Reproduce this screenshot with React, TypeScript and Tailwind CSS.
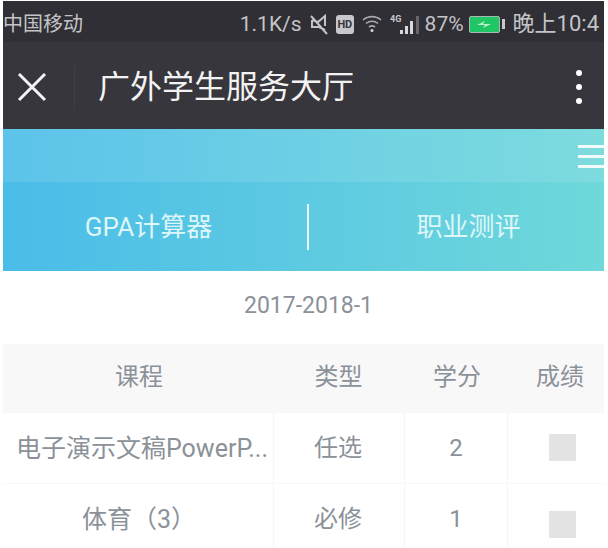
const cjk = "font-['Roboto','Noto_Sans_CJK_SC',sans-serif]";

const rows = [
  { name: "电子演示文稿PowerP...", type: "任选", credit: "2", namePad: "pl-[8px]", boxPad: "pb-[2px]" },
  { name: "体育（3）", type: "必修", credit: "1", namePad: "pl-[2px]", boxPad: "pt-[10px]" },
];

function StatusIcons() {
  return (
    <div className="flex items-center">
      <svg width="18" height="22" viewBox="0 0 18 22" fill="none" stroke="#c4c4c7" strokeWidth="2" className="ml-[8px]">
        <path d="M1 3l16 18M2 7l6 2 7-6v10M15 17l-6-3-7 0V7" />
      </svg>
      <div className="ml-[8px] flex h-[19px] w-[18px] items-center justify-center rounded-[3px] bg-[#c8c8cc] text-[11px] font-bold leading-none tracking-[-0.5px] text-[#35353b]">
        HD
      </div>
      <svg width="20" height="18" viewBox="0 0 20 18" fill="none" stroke="#a9a9ad" strokeWidth="1.6" className="ml-[8px]">
        <path d="M1 5c5-4.500 13-4.500 18 0M4 8.500c3.500-3 8.500-3 12 0M7 12c2-1.500 4-1.500 6 0" />
        <circle cx="10" cy="15.500" r="1.500" fill="#d5d5d8" stroke="none" />
      </svg>
      <svg width="30" height="22" viewBox="0 0 30 22" className="ml-[8px]">
        <text x="0" y="9" fontSize="9" fontWeight="700" fill="#c9c9cc" fontFamily="Roboto">4G</text>
        <rect x="10" y="17" width="3" height="4" fill="#d8d8da" />
        <rect x="15" y="13" width="3" height="8" fill="#d8d8da" />
        <rect x="20" y="8" width="3" height="13" fill="#d8d8da" />
        <rect x="26" y="3" width="3" height="18" fill="#66666a" />
      </svg>
      <span className="ml-[5px] text-[21px] leading-none text-[#c4c4c7]">87%</span>
      <div className="ml-[5px] flex h-[17px] w-[31px] items-center justify-center rounded-[2px] border border-[#a8b8ae] bg-[#20c565]">
        <svg width="14" height="7" viewBox="0 0 14 7"><path d="M0 4l8-4-2 3h8L6 7l2-3z" fill="#b8f0cc" /></svg>
      </div>
      <div className="ml-[2px] h-[10px] w-[3px] bg-[#c8c8cc]" />
    </div>
  );
}

export default function App() {
  return (
    <div className={`${cjk} h-[548px] w-[608px] overflow-hidden bg-white pl-[3px] pr-[4px] pt-px`}>
      {/* Phone status + title bar */}
      <div className="bg-[#36363c]">
        <div className="flex h-[41px] items-center justify-between whitespace-nowrap bg-[#2f2f35] pt-[5px] text-[#c4c4c7]">
          <span className="text-[20px] leading-none">中国移动</span>
          <div className="flex items-center pr-[5px]">
            <span className="text-[21px] leading-none">1.1K/s</span>
            <StatusIcons />
            <span className="ml-[8px] text-[22px] leading-none">晚上10:4</span>
          </div>
        </div>
        <div className="flex h-[87px] items-center pt-[3px]">
          <svg width="30" height="30" viewBox="0 0 30 30" stroke="#f4f4f4" strokeWidth="3" className="ml-[14px]">
            <path d="M2 2l26 26M28 2L2 28" />
          </svg>
          <div className="ml-[27px] h-[44px] w-px bg-[#3f3f45]" />
          <h1 className="ml-[23px] text-[32px] leading-none text-[#f2f2f2]">广外学生服务大厅</h1>
          <div className="ml-auto mr-[22px] flex flex-col gap-[8px]">
            <div className="h-[6px] w-[6px] rounded-full bg-white" />
            <div className="h-[6px] w-[6px] rounded-full bg-white" />
            <div className="h-[6px] w-[6px] rounded-full bg-white" />
          </div>
        </div>
      </div>

      {/* Gradient header */}
      <div className="bg-gradient-to-r from-[#4abce8] to-[#6fd8da]">
        <div className="flex h-[53px] justify-end bg-white/10 pt-[16px]">
          <div className="flex h-[23px] w-[26px] flex-col justify-between">
            <div className="h-[3px] bg-white/90" />
            <div className="h-[3px] bg-white/90" />
            <div className="h-[3px] bg-white/90" />
          </div>
        </div>
        <div className="flex h-[89px] items-center text-[26px] leading-none text-[#dff6f8]">
          <div className="w-[304px] pr-[13px] text-center">GPA计算器</div>
          <div className="h-[46px] w-[2px] bg-white/85" />
          <div className="flex-1 pl-[24px] text-center">职业测评</div>
        </div>
      </div>

      {/* Term */}
      <div className="flex h-[73px] items-center justify-center pb-[5px] pl-[10px] text-[23px] leading-none text-[#8b9198]">
        2017-2018-1
      </div>

      {/* Table */}
      <div className="text-[24px] leading-none text-[#8b9198]">
        <div className="grid h-[69px] grid-cols-[270px_131px_103px_1fr] items-center bg-[#f8f8f9] pb-[3px] text-center">
          <div className="pl-[2px]">课程</div>
          <div>类型</div>
          <div className="pl-[3px]">学分</div>
          <div className="pl-[9px]">成绩</div>
        </div>
        {rows.map((row) => (
          <div key={row.type} className="grid h-[71px] grid-cols-[270px_131px_103px_1fr] border-b border-[#f8f8f8] text-center">
            <div className={`flex items-center justify-center whitespace-nowrap text-[25px] ${row.namePad}`}>{row.name}</div>
            <div className="flex items-center justify-center border-l border-[#f6f6f6] pr-[2px]">{row.type}</div>
            <div className="flex items-center justify-center border-l border-[#f6f6f6]">{row.credit}</div>
            <div className={`flex items-center justify-center border-l border-[#f6f6f6] pl-[12px] ${row.boxPad}`}>
              <div className="h-[27px] w-[27px] bg-[#e3e3e4]" />
            </div>
          </div>
        ))}
      </div>
    </div>
  );
}
